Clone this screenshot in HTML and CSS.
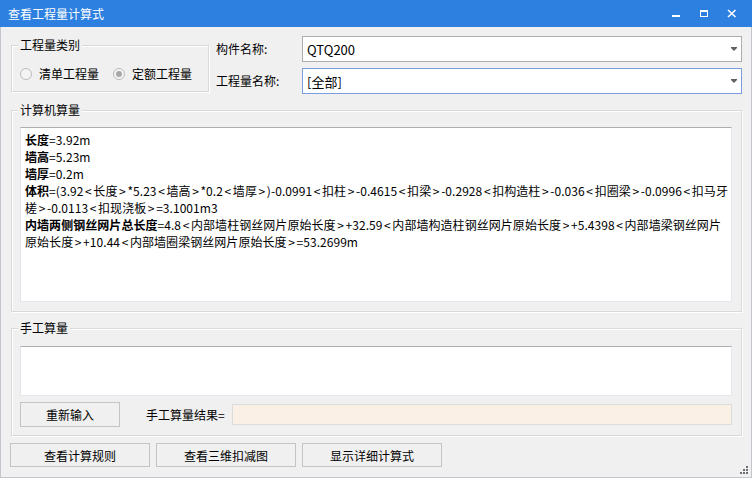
FILE: index.html
```html
<!DOCTYPE html>
<html lang="zh-CN">
<head>
<meta charset="utf-8">
<title>查看工程量计算式</title>
<link rel="stylesheet" href="styles.css">
</head>
<body>
<div class="window">
  <div class="titlebar">
    <span class="title">查看工程量计算式</span>
    <div class="winbtns">
      <svg class="wb" width="28" height="27" viewBox="0 0 28 27"><rect x="6" y="15" width="8" height="2" fill="#fff"/></svg>
      <svg class="wb" width="28" height="27" viewBox="0 0 28 27"><rect x="6.5" y="10.5" width="7" height="6" fill="none" stroke="#fff" stroke-width="1"/><rect x="6" y="10" width="8" height="2" fill="#fff"/></svg>
      <svg class="wb" width="28" height="27" viewBox="0 0 28 27"><path d="M6 10 L13.5 17 M13.5 10 L6 17" stroke="#fff" stroke-width="1.6"/></svg>
    </div>
  </div>
  <div class="content">
    <div class="toprow">
      <div class="group g1">
        <span class="gtitle">工程量类别</span>
        <div class="radios">
          <label class="radio"><span class="rcircle"></span><span>清单工程量</span></label>
          <label class="radio"><span class="rcircle checked"></span><span>定额工程量</span></label>
        </div>
      </div>
      <div class="labels">
        <div class="lbl">构件名称:</div>
        <div class="lbl">工程量名称:</div>
      </div>
      <div class="combos">
        <div class="combo"><span>QTQ200</span><span class="arrow"></span></div>
        <div class="combo focused"><span>[全部]</span><span class="arrow"></span></div>
      </div>
    </div>

    <div class="group g2">
      <span class="gtitle">计算机算量</span>
      <div class="textbox calc">
        <div class="ln"><b>长度</b>=3.92m</div>
        <div class="ln"><b>墙高</b>=5.23m</div>
        <div class="ln"><b>墙厚</b>=0.2m</div>
        <div class="ln"><b>体积</b>=(3.92<span class="a">&lt;</span>长度<span class="a">&gt;</span>*5.23<span class="a">&lt;</span>墙高<span class="a">&gt;</span>*0.2<span class="a">&lt;</span>墙厚<span class="a">&gt;</span>)-0.0991<span class="a">&lt;</span>扣柱<span class="a">&gt;</span>-0.4615<span class="a">&lt;</span>扣梁<span class="a">&gt;</span>-0.2928<span class="a">&lt;</span>扣构造柱<span class="a">&gt;</span>-0.036<span class="a">&lt;</span>扣圈梁<span class="a">&gt;</span>-0.0996<span class="a">&lt;</span>扣马牙</div>
        <div class="ln">槎<span class="a">&gt;</span>-0.0113<span class="a">&lt;</span>扣现浇板<span class="a">&gt;</span>=3.1001m3</div>
        <div class="ln"><b>内墙两侧钢丝网片总长度</b>=4.8<span class="a">&lt;</span>内部墙柱钢丝网片原始长度<span class="a">&gt;</span>+32.59<span class="a">&lt;</span>内部墙构造柱钢丝网片原始长度<span class="a">&gt;</span>+5.4398<span class="a">&lt;</span>内部墙梁钢丝网片</div>
        <div class="ln">原始长度<span class="a">&gt;</span>+10.44<span class="a">&lt;</span>内部墙圈梁钢丝网片原始长度<span class="a">&gt;</span>=53.2699m</div>
      </div>
    </div>

    <div class="group g3">
      <span class="gtitle">手工算量</span>
      <div class="textbox manual"></div>
      <div class="manrow">
        <button class="btn reinput">重新输入</button>
        <span class="reslbl">手工算量结果=</span>
        <div class="result"></div>
      </div>
    </div>

    <div class="btnrow">
      <button class="btn big">查看计算规则</button>
      <button class="btn big">查看三维扣减图</button>
      <button class="btn big">显示详细计算式</button>
    </div>
    <svg class="grip" width="9" height="9" viewBox="0 0 9 9">
      <rect x="6" y="0" width="2" height="2" fill="#6d6d7a"/>
      <rect x="3" y="3" width="2" height="2" fill="#6d6d7a"/>
      <rect x="6" y="3" width="2" height="2" fill="#6d6d7a"/>
      <rect x="0" y="6" width="2" height="2" fill="#6d6d7a"/>
      <rect x="3" y="6" width="2" height="2" fill="#6d6d7a"/>
      <rect x="6" y="6" width="2" height="2" fill="#6d6d7a"/>
    </svg>
  </div>
</div>
</body>
</html>
```
FILE: styles.css
```css
* { box-sizing: border-box; }
html, body { margin: 0; padding: 0; }
body {
  width: 752px;
  height: 478px;
  overflow: hidden;
  background: #f0f0f0;
  font-family: "Noto Sans CJK SC", "Microsoft YaHei", sans-serif;
  font-size: 12px;
  color: #000;
}
.window { width: 752px; height: 478px; display: flex; flex-direction: column; }
.titlebar {
  height: 27px;
  background: #2d7fe0;
  display: flex;
  align-items: center;
  justify-content: space-between;
  color: #fff;
  flex: none;
}
.title { padding-left: 8px; font-size: 12px; line-height: 27px; margin-top: -1px; }
.winbtns { display: flex; padding-right: 2px; align-self: stretch; }
.wb { display: block; }
.content {
  position: relative;
  flex: 1;
  border: 1px solid #c2c6cc;
  border-top: none;
  padding: 9px 9px 0 9px;
  display: flex;
  flex-direction: column;
}
.group {
  position: relative;
  border: 1px solid #d9d9d9;
  box-shadow: inset 1px 1px 0 #fff, 1px 1px 0 #fff;
}
.gtitle {
  position: absolute;
  top: -10px;
  left: 6px;
  padding: 0 2px;
  background: #f0f0f0;
  line-height: 17px;
  font-size: 12px;
}
.toprow { display: flex; margin-left: 1px; }
.g1 { width: 198px; height: 47px; margin-top: 9px; flex: none; }
.radios { display: flex; margin-top: 19px; margin-left: 8px; }
.radio { display: flex; align-items: center; gap: 7px; line-height: 17px; }
.radio + .radio { margin-left: 14px; }
.rcircle {
  width: 12px; height: 12px; border-radius: 50%;
  border: 1px solid #bcbcbc;
  background: #f4f4f4;
  position: relative;
  flex: none;
}
.rcircle.checked::after {
  content: "";
  position: absolute;
  left: 2px; top: 2px;
  width: 6px; height: 6px;
  border-radius: 50%;
  background: #a8a8a8;
}
.labels { width: 86px; margin-left: 7px; display: flex; flex-direction: column; gap: 6px; flex: none; }
.lbl { height: 26px; line-height: 26px; }
.combos { display: flex; flex-direction: column; gap: 6px; width: 440px; flex: none; }
.combo {
  height: 26px;
  border: 1px solid #adadad;
  background: #fff;
  display: flex;
  align-items: center;
  justify-content: space-between;
  padding: 0 4px 0 4px;
  font-size: 13px;
}
.combo.focused { border-color: #7a9ee0; }
.arrow {
  width: 0; height: 0;
  border-left: 3px solid transparent;
  border-right: 3px solid transparent;
  border-top: 3px solid #606060;
  position: relative;
  margin-top: 1px;
}
.arrow::before {
  content: "";
  position: absolute;
  left: -3px; top: -4px;
  width: 6px; height: 1px;
  background: #606060;
}
.g2 { margin-top: 16px; height: 202px; margin-left: 1px; width: 731px; padding: 16px 9px 9px 8px; }
.textbox {
  background: #fff;
  border: 1px solid;
  border-color: #abadb3 #e3e9ef #e3e9ef #e2e3ea;
}
.calc { height: 175px; padding: 3px 4px; }
.ln { line-height: 17px; white-space: nowrap; font-size: 12px; letter-spacing: 0.05px; }
.ln b { font-weight: 700; }
.a { margin: 0 1.6px; }
.g3 { margin-top: 16px; height: 108px; margin-left: 1px; width: 731px; padding: 17px 9px 0 8px; }
.manual { height: 50px; }
.manrow { display: flex; align-items: center; margin-top: 6px; height: 25px; }
.btn {
  font-family: inherit;
  font-size: 12px;
  color: #000;
  background: #f0f0f0;
  border: 1px solid #c4c4c4;
  padding: 0;
  margin: 0;
}
.reinput { width: 100px; height: 25px; }
.reslbl { margin-left: 26px; width: 86px; }
.result { width: 500px; height: 21px; background: #faf0e6; border: 1px solid #dcdcdc; }
.btnrow { display: flex; gap: 6px; margin-top: 7px; }
.big { width: 140px; height: 24px; }
.grip { position: absolute; right: 2px; bottom: 2px; }
```
